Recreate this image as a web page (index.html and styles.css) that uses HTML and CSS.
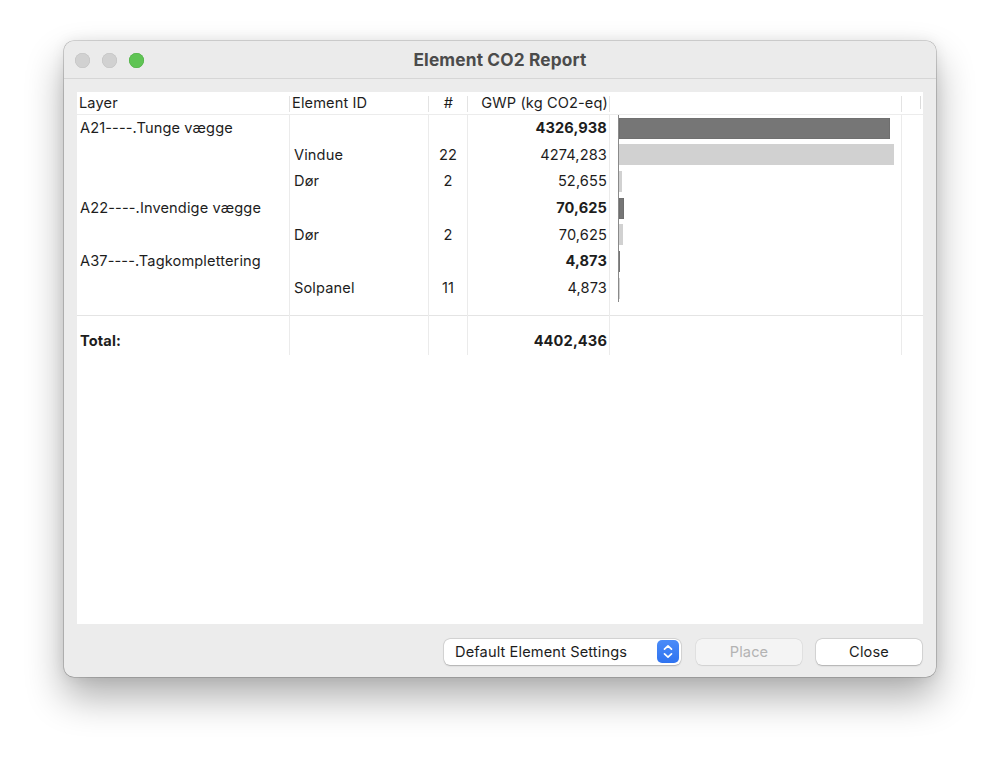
FILE: index.html
```html
<!DOCTYPE html>
<html lang="da">
<head>
<meta charset="utf-8">
<title>Element CO2 Report</title>
<link rel="stylesheet" href="styles.css">
</head>
<body>
<div class="window">
  <div class="titlebar">
    <div class="lights">
      <span class="light gray"></span>
      <span class="light gray"></span>
      <span class="light green"></span>
    </div>
    <div class="title">Element CO2 Report</div>
    <div></div>
  </div>
  <div class="content">
    <div class="tbl">
      <div class="thead">
        <div class="th c-layer">Layer</div>
        <div class="th c-id">Element ID</div>
        <div class="th c-num">#</div>
        <div class="th c-gwp">GWP (kg CO2-eq)</div>
        <div class="th c-chart"></div>
        <div class="th c-end"></div>
        <div class="th c-rest"></div>
      </div>
      <div class="tbody">
        <div class="td c-layer">A21----.Tunge vægge</div>
        <div class="td c-id"></div>
        <div class="td c-num"></div>
        <div class="td c-gwp b">4326,938</div>
        <div class="td c-chart"><div class="axis"><div class="bar dark" style="width:271px"></div></div></div>
        <div class="td c-end"></div>

        <div class="td c-layer"></div>
        <div class="td c-id">Vindue</div>
        <div class="td c-num">22</div>
        <div class="td c-gwp">4274,283</div>
        <div class="td c-chart"><div class="axis"><div class="bar light-bar" style="width:275px"></div></div></div>
        <div class="td c-end"></div>

        <div class="td c-layer"></div>
        <div class="td c-id">Dør</div>
        <div class="td c-num">2</div>
        <div class="td c-gwp">52,655</div>
        <div class="td c-chart"><div class="axis"><div class="bar light-bar" style="width:3px"></div></div></div>
        <div class="td c-end"></div>

        <div class="td c-layer">A22----.Invendige vægge</div>
        <div class="td c-id"></div>
        <div class="td c-num"></div>
        <div class="td c-gwp b">70,625</div>
        <div class="td c-chart"><div class="axis"><div class="bar dark" style="width:5px"></div></div></div>
        <div class="td c-end"></div>

        <div class="td c-layer"></div>
        <div class="td c-id">Dør</div>
        <div class="td c-num">2</div>
        <div class="td c-gwp">70,625</div>
        <div class="td c-chart"><div class="axis"><div class="bar light-bar" style="width:4px"></div></div></div>
        <div class="td c-end"></div>

        <div class="td c-layer">A37----.Tagkomplettering</div>
        <div class="td c-id"></div>
        <div class="td c-num"></div>
        <div class="td c-gwp b">4,873</div>
        <div class="td c-chart"><div class="axis"><div class="bar dark" style="width:0.5px"></div></div></div>
        <div class="td c-end"></div>

        <div class="td c-layer"></div>
        <div class="td c-id">Solpanel</div>
        <div class="td c-num">11</div>
        <div class="td c-gwp">4,873</div>
        <div class="td c-chart"><div class="axis"><div class="bar light-bar" style="width:0.5px"></div></div></div>
        <div class="td c-end"></div>

        <div class="td sep c-layer"></div>
        <div class="td sep c-id"></div>
        <div class="td sep c-num"></div>
        <div class="td sep c-gwp"></div>
        <div class="td sep c-chart"></div>
        <div class="td sep c-end"></div>

        <div class="td c-layer b">Total:</div>
        <div class="td c-id"></div>
        <div class="td c-num"></div>
        <div class="td c-gwp b">4402,436</div>
        <div class="td c-chart"></div>
        <div class="td c-end"></div>
      </div>
    </div>
  </div>
  <div class="footer">
    <div class="popup">
      <span class="popup-label">Default Element Settings</span>
      <span class="stepper">
        <svg width="22" height="23" viewBox="0 0 22 23">
          <path d="M7.5 9.2 L11 5.9 L14.5 9.2" fill="none" stroke="#fff" stroke-width="1.7" stroke-linecap="round" stroke-linejoin="round"/>
          <path d="M7.5 13.8 L11 17.1 L14.5 13.8" fill="none" stroke="#fff" stroke-width="1.7" stroke-linecap="round" stroke-linejoin="round"/>
        </svg>
      </span>
    </div>
    <div class="btn disabled">Place</div>
    <div class="btn">Close</div>
  </div>
</div>
</body>
</html>
```

FILE: styles.css
```css
* { box-sizing: border-box; }

html, body {
  margin: 0;
  padding: 0;
  background: #ffffff;
}

body {
  font-family: Inter, "Liberation Sans", sans-serif;
  color: #1d1d1d;
  padding: 41px 0 0 64px;
  height: 767px;
  overflow: hidden;
}

.window {
  width: 872px;
  height: 636px;
  background: #ececec;
  border-radius: 10px;
  box-shadow: 0 0 0 0.6px rgba(0,0,0,0.28), 0 20px 38px rgba(0,0,0,0.32), 0 0 14px rgba(0,0,0,0.08);
  display: flex;
  flex-direction: column;
  overflow: hidden;
}

.titlebar {
  height: 38px;
  flex: none;
  display: grid;
  grid-template-columns: 1fr auto 1fr;
  align-items: center;
  background: #ebebeb;
  border-bottom: 1px solid #d6d6d6;
  padding: 0 11px;
}

.lights {
  display: flex;
  gap: 12px;
  align-items: center;
  padding-top: 1px;
}

.light {
  width: 15px;
  height: 15px;
  border-radius: 50%;
  display: block;
}

.light.gray {
  background: #d1d1d1;
  box-shadow: inset 0 0 0 0.6px #c2c2c2;
}

.light.green {
  background: #5fc454;
  box-shadow: inset 0 0 0 0.6px #4fae45;
}

.title {
  font-weight: 700;
  font-size: 17.3px;
  color: #4b4b4b;
  letter-spacing: 0.15px;
}

.content {
  padding: 13px 13px 0 13px;
  flex: none;
}

.tbl {
  background: #ffffff;
  height: 532px;
  font-size: 14.6px;
  letter-spacing: 0.12px;
}

.thead {
  display: grid;
  grid-template-columns: 213px 139px 39px 142px 292px 19px 1fr;
  height: 23px;
  border-bottom: 1px solid #ececec;
}

.th {
  position: relative;
  line-height: 22px;
  white-space: nowrap;
}

.th::after {
  content: "";
  position: absolute;
  right: 0;
  top: 4px;
  bottom: 2px;
  width: 1px;
  background: #e3e3e3;
}

.th.c-end::after { top: 4px; bottom: 5px; background: #dcdcdc; }
.th.c-rest::after { display: none; }

.th.c-layer { padding-left: 2px; }
.th.c-id { padding-left: 2px; }
.th.c-num { text-align: center; }
.th.c-gwp { text-align: right; padding-right: 2px; }

.tbody {
  display: grid;
  grid-template-columns: 213px 139px 39px 142px 292px 1fr;
  grid-auto-rows: 26.67px;
}

.td {
  border-right: 1px solid #ebebeb;
  line-height: 26.67px;
  white-space: nowrap;
}

.td.c-end { border-right: none; }

.td.c-layer { padding-left: 3px; }
.td.c-id { padding-left: 4px; }
.td.c-num { text-align: center; }
.td.c-gwp { text-align: right; padding-right: 2px; }

.b { font-weight: 700; }

.td.c-chart {
  padding-left: 7.5px;
}

.axis {
  height: 100%;
  border-left: 1.3px solid #8a8a8a;
  display: flex;
  align-items: center;
}

.bar {
  height: 21px;
}

.bar.dark {
  background: #767676;
  box-shadow: inset 0 0 0 0.6px #6a6a6a;
}

.bar.light-bar {
  background: #d1d1d1;
}

.td.sep {
  background: linear-gradient(to bottom, transparent 12.5px, #e4e4e4 12.5px, #e4e4e4 14.2px, transparent 14.2px);
}

.footer {
  flex: none;
  display: flex;
  justify-content: flex-end;
  align-items: center;
  gap: 14px;
  padding: 14.5px 14px 0 0;
}

.popup {
  width: 237px;
  height: 26px;
  background: #ffffff;
  border-radius: 6px;
  box-shadow: 0 0 0 0.5px rgba(0,0,0,0.14), 0 0.8px 1.6px rgba(0,0,0,0.2);
  display: flex;
  align-items: center;
  justify-content: space-between;
  padding: 0 2px 0 11px;
  font-size: 14.6px;
  letter-spacing: 0.12px;
  color: #1d1d1d;
  margin-right: 1px;
}

.stepper {
  width: 22px;
  height: 23px;
  border-radius: 5px;
  background: linear-gradient(to bottom, #4b8cf8, #2f73f0);
  display: block;
}

.stepper svg { display: block; }

.btn {
  width: 106px;
  height: 26px;
  border-radius: 6px;
  background: #ffffff;
  box-shadow: 0 0 0 0.5px rgba(0,0,0,0.14), 0 0.8px 1.6px rgba(0,0,0,0.2);
  display: flex;
  align-items: center;
  justify-content: center;
  font-size: 14.6px;
  letter-spacing: 0.12px;
  color: #1d1d1d;
}

.btn.disabled {
  background: #f4f4f4;
  color: #b3b3b3;
  box-shadow: 0 0 0 0.5px rgba(0,0,0,0.08), 0 0.6px 1.2px rgba(0,0,0,0.08);
}
```
